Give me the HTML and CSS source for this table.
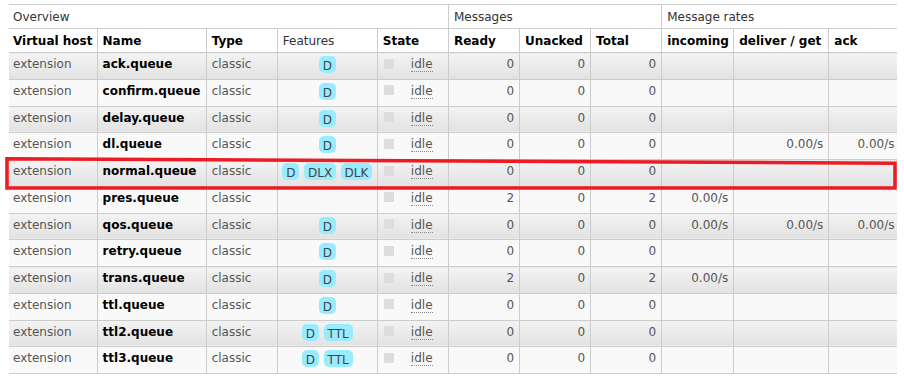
FILE: index.html
```html
<!DOCTYPE html>
<html lang="en">
<head>
<meta charset="utf-8">
<title>Queues</title>
<link rel="stylesheet" href="styles.css">
</head>
<body>
<div class="page">
<table class="list">
<colgroup>
<col class="w-vhost"><col class="w-name"><col class="w-type"><col class="w-feat"><col class="w-state"><col class="w-num"><col class="w-num"><col class="w-num"><col class="w-rate"><col class="w-deliver"><col class="w-ack">
</colgroup>
<thead>
<tr class="group">
<th colspan="5">Overview</th>
<th colspan="3" class="sep">Messages</th>
<th colspan="3" class="sep">Message rates</th>
</tr>
<tr class="cols">
<th>Virtual host</th><th>Name</th><th>Type</th><th class="normal">Features</th><th>State</th><th>Ready</th><th>Unacked</th><th>Total</th><th>incoming</th><th>deliver / get</th><th>ack</th>
</tr>
</thead>
<tbody>
<tr class="alt1"><td>extension</td><td class="name">ack.queue</td><td>classic</td><td><div class="feats"><abbr class="tag">D</abbr></div></td><td><div class="state"><span class="dot"></span><abbr class="idle">idle</abbr></div></td><td class="r">0</td><td class="r">0</td><td class="r">0</td><td class="r"></td><td class="r"></td><td class="r last"></td></tr>
<tr class="alt2"><td>extension</td><td class="name">confirm.queue</td><td>classic</td><td><div class="feats"><abbr class="tag">D</abbr></div></td><td><div class="state"><span class="dot"></span><abbr class="idle">idle</abbr></div></td><td class="r">0</td><td class="r">0</td><td class="r">0</td><td class="r"></td><td class="r"></td><td class="r last"></td></tr>
<tr class="alt1"><td>extension</td><td class="name">delay.queue</td><td>classic</td><td><div class="feats"><abbr class="tag">D</abbr></div></td><td><div class="state"><span class="dot"></span><abbr class="idle">idle</abbr></div></td><td class="r">0</td><td class="r">0</td><td class="r">0</td><td class="r"></td><td class="r"></td><td class="r last"></td></tr>
<tr class="alt2"><td>extension</td><td class="name">dl.queue</td><td>classic</td><td><div class="feats"><abbr class="tag">D</abbr></div></td><td><div class="state"><span class="dot"></span><abbr class="idle">idle</abbr></div></td><td class="r">0</td><td class="r">0</td><td class="r">0</td><td class="r"></td><td class="r">0.00/s</td><td class="r last">0.00/s</td></tr>
<tr class="alt1"><td>extension</td><td class="name">normal.queue</td><td>classic</td><td><div class="feats"><abbr class="tag">D</abbr><abbr class="tag">DLX</abbr><abbr class="tag">DLK</abbr></div></td><td><div class="state"><span class="dot"></span><abbr class="idle">idle</abbr></div></td><td class="r">0</td><td class="r">0</td><td class="r">0</td><td class="r"></td><td class="r"></td><td class="r last"></td></tr>
<tr class="alt2"><td>extension</td><td class="name">pres.queue</td><td>classic</td><td><div class="feats"></div></td><td><div class="state"><span class="dot"></span><abbr class="idle">idle</abbr></div></td><td class="r">2</td><td class="r">0</td><td class="r">2</td><td class="r">0.00/s</td><td class="r"></td><td class="r last"></td></tr>
<tr class="alt1"><td>extension</td><td class="name">qos.queue</td><td>classic</td><td><div class="feats"><abbr class="tag">D</abbr></div></td><td><div class="state"><span class="dot"></span><abbr class="idle">idle</abbr></div></td><td class="r">0</td><td class="r">0</td><td class="r">0</td><td class="r">0.00/s</td><td class="r">0.00/s</td><td class="r last">0.00/s</td></tr>
<tr class="alt2"><td>extension</td><td class="name">retry.queue</td><td>classic</td><td><div class="feats"><abbr class="tag">D</abbr></div></td><td><div class="state"><span class="dot"></span><abbr class="idle">idle</abbr></div></td><td class="r">0</td><td class="r">0</td><td class="r">0</td><td class="r"></td><td class="r"></td><td class="r last"></td></tr>
<tr class="alt1"><td>extension</td><td class="name">trans.queue</td><td>classic</td><td><div class="feats"><abbr class="tag">D</abbr></div></td><td><div class="state"><span class="dot"></span><abbr class="idle">idle</abbr></div></td><td class="r">2</td><td class="r">0</td><td class="r">2</td><td class="r">0.00/s</td><td class="r"></td><td class="r last"></td></tr>
<tr class="alt2"><td>extension</td><td class="name">ttl.queue</td><td>classic</td><td><div class="feats"><abbr class="tag">D</abbr></div></td><td><div class="state"><span class="dot"></span><abbr class="idle">idle</abbr></div></td><td class="r">0</td><td class="r">0</td><td class="r">0</td><td class="r"></td><td class="r"></td><td class="r last"></td></tr>
<tr class="alt1"><td>extension</td><td class="name">ttl2.queue</td><td>classic</td><td><div class="feats"><abbr class="tag">D</abbr><abbr class="tag">TTL</abbr></div></td><td><div class="state"><span class="dot"></span><abbr class="idle">idle</abbr></div></td><td class="r">0</td><td class="r">0</td><td class="r">0</td><td class="r"></td><td class="r"></td><td class="r last"></td></tr>
<tr class="alt2"><td>extension</td><td class="name">ttl3.queue</td><td>classic</td><td><div class="feats"><abbr class="tag">D</abbr><abbr class="tag">TTL</abbr></div></td><td><div class="state"><span class="dot"></span><abbr class="idle">idle</abbr></div></td><td class="r">0</td><td class="r">0</td><td class="r">0</td><td class="r"></td><td class="r"></td><td class="r last"></td></tr>
</tbody>
</table>
<svg class="mark" width="904" height="379" viewBox="0 0 904 379" aria-hidden="true">
<path d="M7 158.8 L895 163.2 L895 188 L7 188 Z" fill="none" stroke="#ed1c24" stroke-width="3.6" stroke-linejoin="miter"/>
</svg>
</div>
</body>
</html>
```

FILE: styles.css
```css
html, body {
  margin: 0;
  padding: 0;
  background: #fff;
}

.page {
  position: relative;
  width: 904px;
  height: 379px;
  padding: 4px 0 0 9px;
  box-sizing: border-box;
  overflow: hidden;
  font-family: "DejaVu Sans", Verdana, sans-serif;
  font-size: 12px;
  line-height: 14px;
  color: #555;
}

.list {
  border-collapse: collapse;
  table-layout: fixed;
  width: 888px;
  border-top: 1px solid #ccc;
}

.w-vhost { width: 88px; }
.w-name { width: 109px; }
.w-type { width: 71px; }
.w-feat { width: 100px; }
.w-state { width: 71px; }
.w-num { width: 71px; }
.w-rate { width: 72px; }
.w-deliver { width: 95px; }
.w-ack { width: 68px; }

.list th {
  text-align: left;
  padding: 5px 5px 4px;
  height: 14px;
  white-space: nowrap;
  overflow: hidden;
  background: #fff;
}

.list tr.group th {
  font-weight: normal;
  color: #333;
  border-bottom: 1px solid #ccc;
}

.list tr.group th.sep {
  border-left: 1px solid #ccc;
}

.list tr.cols th {
  font-weight: bold;
  color: #000;
  border-bottom: 1px solid #ccc;
  border-left: 1px solid #ccc;
}

.list tr.cols th.normal {
  font-weight: normal;
  color: #333;
}

.list tr.cols th:first-child,
.list tr.group th:first-child,
.list td:first-child {
  border-left: none;
  padding-left: 4px;
}

.list tbody tr {
  height: 26.75px;
}

.list td {
  vertical-align: top;
  padding: 4px 5px 0;
  border-bottom: 1px solid #ccc;
  border-left: 1px solid #ccc;
  white-space: nowrap;
}

.list tr.alt1 td {
  background: linear-gradient(#f3f3f3, #e2e2e2);
}

.list tr.alt2 td {
  background: #f9f9f9;
}

.list td.name {
  font-weight: bold;
  color: #000;
}

.list td.r {
  text-align: right;
}

.list td.last {
  padding-right: 2.5px;
}

.feats {
  display: flex;
  justify-content: center;
  gap: 4.5px;
  margin-top: -1px;
}

.tag {
  display: inline-block;
  background: #99ebff;
  color: #444;
  padding: 3px 4px 0;
  height: 14px;
  line-height: 14px;
  border-radius: 5px;
  text-decoration: none;
}

.state {
  display: flex;
  align-items: flex-start;
  padding-left: 1px;
}

.dot {
  width: 10px;
  height: 10px;
  margin-top: 1.5px;
  margin-right: 17px;
  background: #ddd;
  flex: none;
}

.idle {
  text-decoration: none;
  border-bottom: 1px dotted #888;
  line-height: 14px;
  height: 14px;
  color: #555;
}

.mark {
  position: absolute;
  left: 0;
  top: 0;
  pointer-events: none;
}
```
